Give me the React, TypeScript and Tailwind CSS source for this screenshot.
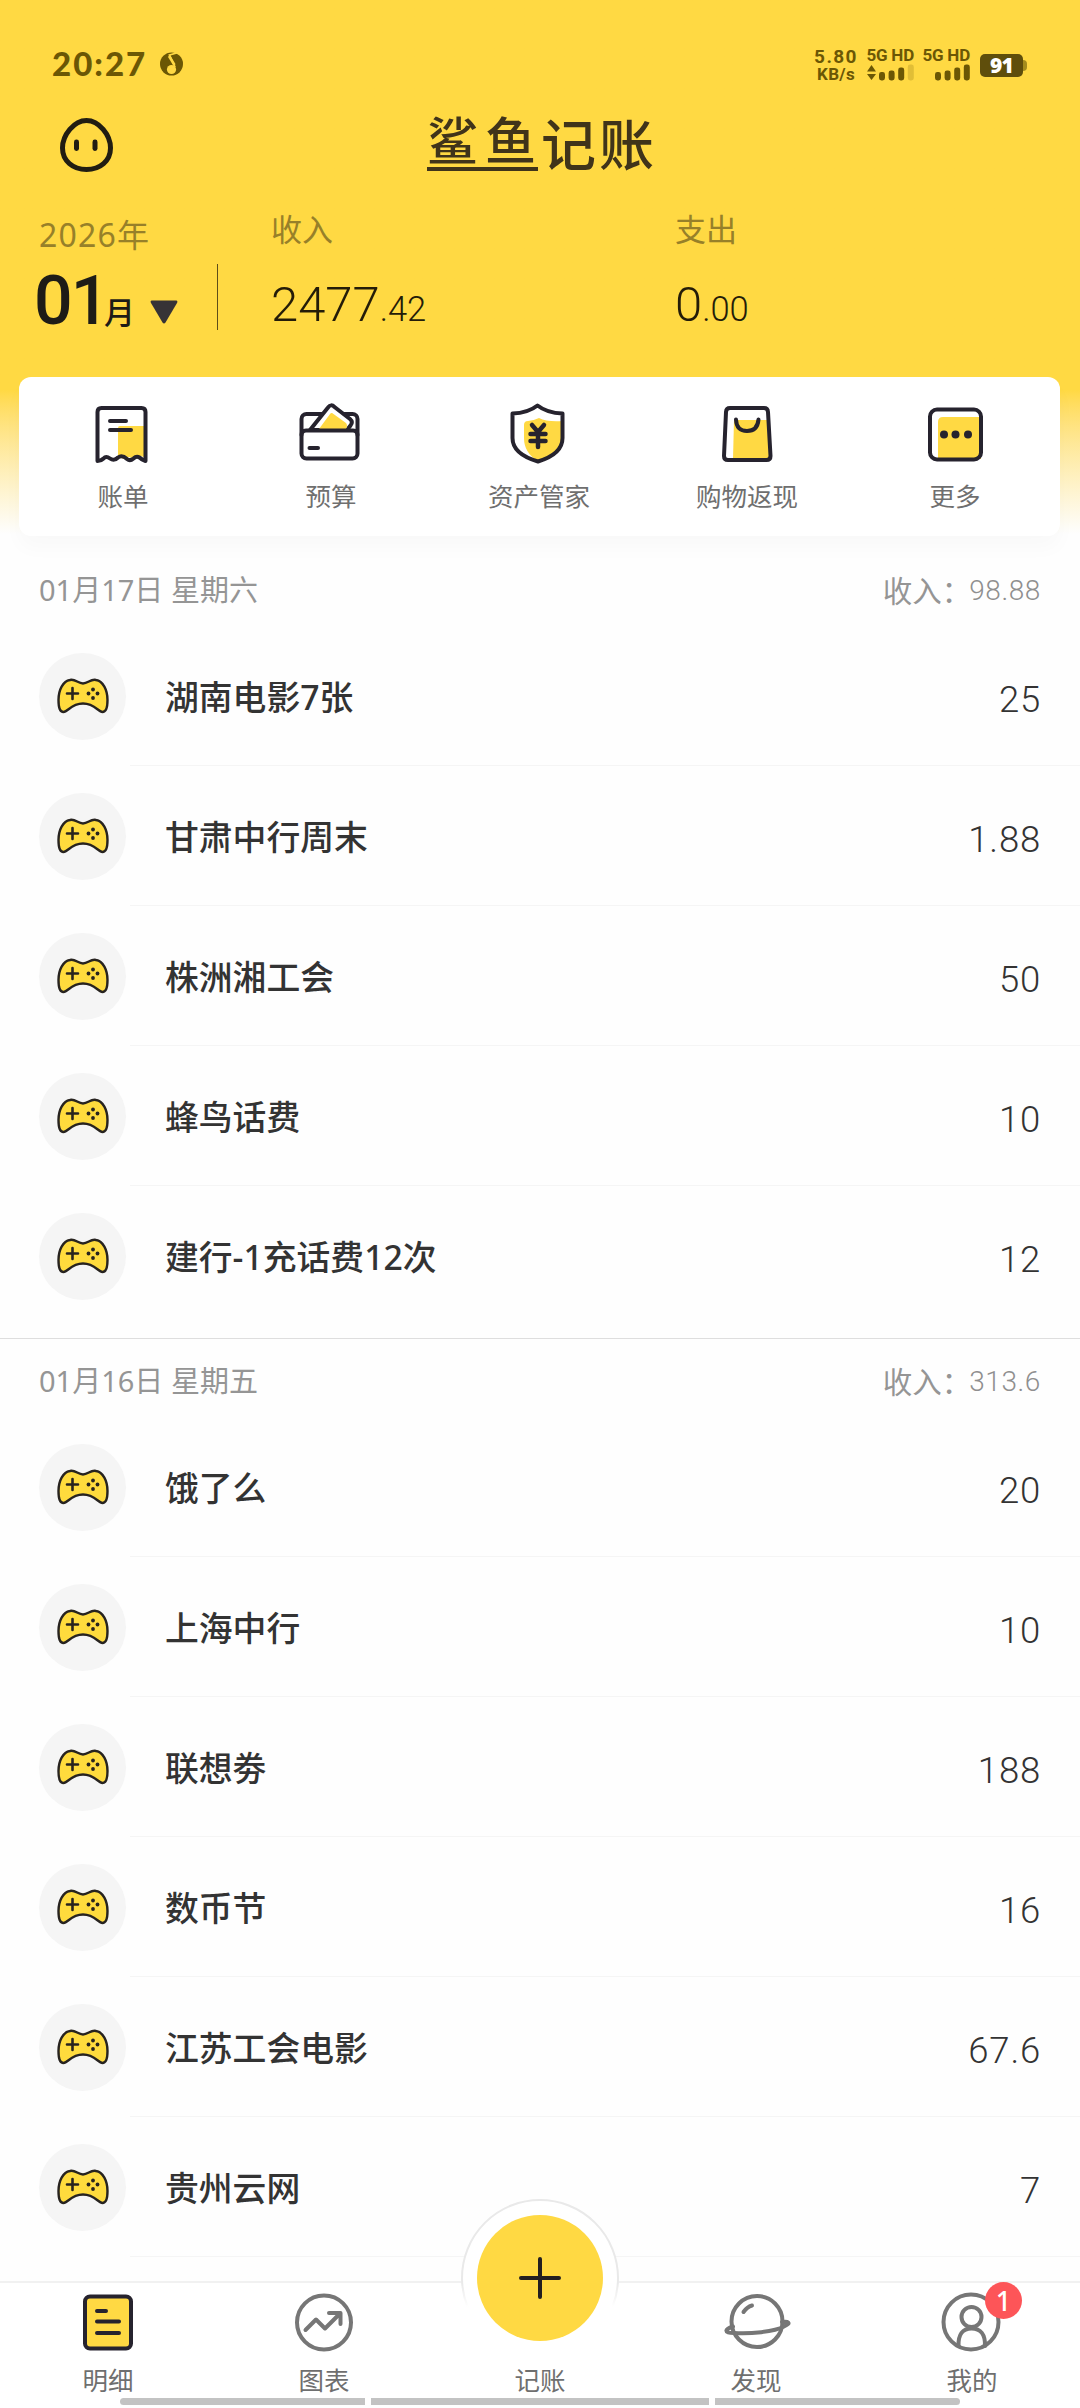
import type { ReactNode } from "react";

interface Entry {
  title: string;
  amount: string;
}

interface Day {
  date: string;
  income: string;
  entries: Entry[];
}

const days: Day[] = [
  {
    date: "01月17日 星期六",
    income: "98.88",
    entries: [
      { title: "湖南电影7张", amount: "25" },
      { title: "甘肃中行周末", amount: "1.88" },
      { title: "株洲湘工会", amount: "50" },
      { title: "蜂鸟话费", amount: "10" },
      { title: "建行-1充话费12次", amount: "12" },
    ],
  },
  {
    date: "01月16日 星期五",
    income: "313.6",
    entries: [
      { title: "饿了么", amount: "20" },
      { title: "上海中行", amount: "10" },
      { title: "联想劵", amount: "188" },
      { title: "数币节", amount: "16" },
      { title: "江苏工会电影", amount: "67.6" },
      { title: "贵州云网", amount: "7" },
    ],
  },
];

const INK = "#26232e";
const YELLOW = "#ffd943";

function MusicIcon() {
  return (
    <svg className="w-[23px] h-[24px]" viewBox="0 0 23 24">
      <circle cx="11.5" cy="12" r="11.5" fill="#6b5705" />
      <path d="M18.500 0.500 L9.500 3 L15 15" fill="none" stroke={YELLOW} strokeWidth="1.800" />
      <path d="M9 4 L14.500 13" stroke={YELLOW} strokeWidth="2.600" />
      <circle cx="11.500" cy="17.500" r="4.600" fill={YELLOW} />
    </svg>
  );
}

function Signal({ arrows, bars }: { arrows?: boolean; bars: number }) {
  return (
    <div className="flex flex-col items-end w-[48px]">
      <div className="text-[17px] leading-[18px] font-bold whitespace-nowrap font-['Roboto',sans-serif] tracking-[-0.2px]">5G HD</div>
      <svg className="w-[48px] h-[17px]" viewBox="0 0 48 17" fill="#6b5705">
        {arrows && <path d="M1 7.5 L5.5 1 L10 7.5Z M1 10 L5.5 16 L10 10Z" />}
        {[0, 1, 2, 3].map(i => (
          <rect
            key={i}
            x={13 + i * 9.6}
            y={[8, 6.5, 3.5, 0.5][i]}
            width="6"
            height={[8.5, 10, 13, 16][i]}
            rx="2.4"
            opacity={i < bars ? 1 : 0.2}
          />
        ))}
      </svg>
    </div>
  );
}

function StatusBar() {
  return (
    <div className="h-[112px] pt-[46px] pl-[52px] pr-[53px] flex items-start justify-between text-[#6b5705]">
      <div className="flex items-center h-[34px]">
        <span className="text-[33px] leading-[34px] font-black tracking-[2px] font-['Lato',sans-serif]">20:27</span>
        <div className="ml-[13px] mt-[2px]"><MusicIcon /></div>
      </div>
      <div className="flex items-start font-['Roboto',sans-serif]">
        <div className="w-[46px] mt-[1px] flex flex-col items-center font-bold">
          <span className="text-[19px] leading-[19px] tracking-[1.4px]">5.80</span>
          <span className="text-[17px] leading-[17px] tracking-[0.3px]">KB/s</span>
        </div>
        <div className="ml-[7px]"><Signal arrows bars={3} /></div>
        <div className="ml-[8px]"><Signal bars={4} /></div>
        <div className="flex items-center ml-[10px] mt-[8px]">
          <div className="w-[43px] h-[23px] rounded-[5px] bg-[#5f4e0c] text-white text-[21px] leading-[23px] font-extrabold text-center tracking-[-0.8px] font-['Open_Sans',sans-serif]">91</div>
          <div className="w-[4px] h-[11px] rounded-r-[4px] bg-[#a48c1d]" />
        </div>
      </div>
    </div>
  );
}

function Amount({ value }: { value: string }) {
  const [whole, cents] = value.split(".");
  return (
    <div className="font-['Roboto',sans-serif] font-light text-[#241c08] text-[49px] leading-[56px]">
      {whole}
      <span className="text-[34.5px]">.{cents}</span>
    </div>
  );
}

function Header() {
  return (
    <>
      <div className="h-[72px] flex items-start relative pl-[60px] pt-[6px]">
        <svg className="w-[53px] h-[54px]" viewBox="0 0 53 54" fill="none">
          <path
            d="M26.5 2.5 C39 2.5 50.5 17 50.5 30 C50.5 43 40 51.5 26.5 51.5 C13 51.5 2.5 43 2.5 30 C2.5 17 14 2.5 26.5 2.5Z"
            stroke="#211d12"
            strokeWidth="5"
          />
          <rect x="14" y="21.5" width="5" height="11.5" rx="2.4" fill="#211d12" />
          <rect x="32.5" y="21.5" width="5" height="11.5" rx="2.4" fill="#211d12" />
        </svg>
        <h1 className="absolute inset-x-0 top-[4px] flex justify-center text-[#40341a] font-medium leading-[56px] whitespace-nowrap">
          <span className="w-[111px] h-[55px] border-b-4 border-[#40341a] text-[51px] leading-[48px] tracking-[7px]">鲨鱼</span>
          <span className="ml-[3px] w-[112px] text-[55px] tracking-[3px]">记账</span>
        </h1>
      </div>
      <div className="flex h-[193px]">
        <div className="w-[217px] pl-[39px] pt-[31px]">
          <div className="text-[32px] leading-[40px] text-[#978029] tracking-[1.2px]">2026年</div>
          <div className="flex items-baseline ml-[-5px] mt-[12px]">
            <span className="w-[70px] text-[68px] leading-[68px] font-medium text-[#1e1c17] tracking-[-2px] font-['Roboto',sans-serif]">01</span>
            <span className="text-[31px] leading-[40px] font-medium text-[#1e1c17]">月</span>
            <svg className="w-[28px] h-[24px] ml-[15px]" viewBox="0 0 28 24">
              <path d="M1.5 0.5 H26.5 Q28 1 27 3 L15.5 22.5 Q14 24.5 12.5 22.5 L1 3 Q0 1 1.5 0.5Z" fill="#363336" />
            </svg>
          </div>
        </div>
        <div className="w-px h-[66px] mt-[80px] bg-[#5d4d18]" />
        <div className="w-[404px] pl-[53px] pt-[25px]">
          <div className="text-[31px] leading-[40px] text-[#978029]">收入</div>
          <div className="mt-[28px]"><Amount value="2477.42" /></div>
        </div>
        <div className="pl-[53px] pt-[25px]">
          <div className="text-[31px] leading-[40px] text-[#978029]">支出</div>
          <div className="mt-[28px]"><Amount value="0.00" /></div>
        </div>
      </div>
    </>
  );
}

function QuickAction({ label, children }: { label: string; children: ReactNode }) {
  return (
    <div className="flex flex-col items-center w-[208px] pt-[26px]">
      <svg className="w-[60px] h-[60px] overflow-visible" viewBox="0 0 60 60" fill="none" stroke={INK} strokeWidth="4" strokeLinecap="round" strokeLinejoin="round">
        {children}
      </svg>
      <span className="mt-[15px] text-[25.5px] leading-[36px] text-[#6f6f6f]">{label}</span>
    </div>
  );
}

function QuickActions() {
  return (
    <div className="ml-[19px] mr-[20px] h-[159px] bg-white rounded-[12px] flex shadow-[0_12px_20px_rgba(0,0,0,0.025)]">
      <QuickAction label="账单">
        <path d="M25 25 Q25 23 27 23 H53 V55 L48 53 L42 56 L36 54 L31 56 L25 54Z" fill={YELLOW} stroke="none" />
        <path d="M4.5 58 V9 Q4.5 5 8.500 5 H48.500 Q52.500 5 52.500 9 V58 Q49 57 46.500 54.500 Q43.500 52.500 40.500 55.500 Q37 58.500 34 56 Q29 51.500 25 54.500 Q21 58.500 17 55.500 Q13 52.500 10.500 55.500 Q8 58 4.500 58Z" />
        <path d="M17 18 H33 M17 27 H38" />
      </QuickAction>
      <QuickAction label="预算">
        <rect x="0.500" y="11" width="56" height="44.500" rx="5" />
        <path d="M9 27 L27 4.500 Q30 0.500 33.500 4 L49 16 Q52.500 19 49.500 22.500 L46 27Z" fill="#fff" />
        <path d="M18 26 L29 11 Q30.500 9 32.500 11 L45 20 Q47 22 45 26Z" fill={YELLOW} stroke="none" />
        <path d="M0.500 32 Q0.500 27.500 5 27.500 H52 Q56.500 27.500 56.500 32" />
        <path d="M8.500 45 H17" />
      </QuickAction>
      <QuickAction label="资产管家">
        <path d="M15 22 Q15 18 19 18 Q25 17.500 30 15 Q38 19 53 18 V35 Q53 50 29 58 Q15 50 15 35Z" fill={YELLOW} stroke="none" />
        <path d="M28.500 2.500 Q38 10 53.500 10.500 V35 Q53.500 51 29 58.500 Q3.500 51 3.500 35 V10.500 Q19 10 28.500 2.500Z" />
        <path d="M23 22 L29 29 L35 22 M29 29 V44 M21.500 31 H36.500 M21.500 38 H36.500" strokeWidth="4.500" />
      </QuickAction>
      <QuickAction label="购物返现">
        <path d="M17 17 H50 L52.500 56 H16Z" fill={YELLOW} stroke="none" />
        <path d="M13 5 H47 Q50.800 5 51 9 L53.500 53 Q53.500 57 49.500 57 H11 Q7 57 7 53 L9 9 Q9.200 5 13 5Z" />
        <path d="M19 16.500 Q19.500 28 30 28 Q40.500 28 41.500 16.500" />
      </QuickAction>
      <QuickAction label="更多">
        <path d="M13 56 V19 Q13 14 18 14 H56 V56Z" fill={YELLOW} stroke="none" />
        <rect x="5" y="6.500" width="51" height="50" rx="7" />
        <g fill={INK} stroke="none">
          <circle cx="19" cy="31.500" r="4" />
          <circle cx="30.500" cy="31.500" r="4" />
          <circle cx="43" cy="31.500" r="4" />
        </g>
      </QuickAction>
    </div>
  );
}

function GamepadIcon() {
  return (
    <svg className="w-[52px] h-[36px]" viewBox="0 0 52 36" fill="none" stroke="#27231f" strokeWidth="2.4" strokeLinecap="round">
      <path
        d="M13 2 C18 0.500 21 5.500 26 5.500 C31 5.500 34 0.500 39 2 C46 3 50.500 12 50.500 22 C50.500 30 49 34 45.500 34 C41 34 38 25.500 26 25.500 C14 25.500 11 34 6.500 34 C3 34 1.500 30 1.500 22 C1.500 12 6 3 13 2Z"
        fill="#ffdb3d"
      />
      <path d="M10 15.500 H21 M15.500 10 V21" strokeWidth="2.600" />
      <g fill="#27231f" stroke="none">
        <circle cx="36" cy="11.500" r="1.900" />
        <circle cx="31.500" cy="15.500" r="1.900" />
        <circle cx="40.500" cy="15.500" r="1.900" />
        <circle cx="36" cy="20" r="1.900" />
      </g>
    </svg>
  );
}

function EntryRow({ entry, last }: { entry: Entry; last: boolean }) {
  return (
    <div className="h-[140px] flex items-stretch pl-[39px]">
      <div className="w-[91px] flex items-center">
        <div className="w-[87px] h-[87px] rounded-full bg-[#f5f5f5] flex items-center justify-center">
          <GamepadIcon />
        </div>
      </div>
      <div className={`flex-1 flex items-center justify-between pl-[35px] pr-[39px] border-b-[1.5px] ${last ? "border-transparent" : "border-[#f5f5f5]"}`}>
        <span className="mt-[2px] text-[33.8px] leading-[50px] font-medium text-[#333]">{entry.title}</span>
        <span className="mt-[8px] text-[36.5px] leading-[44px] font-light text-[#333] font-['Roboto',sans-serif] tracking-[0.8px]">{entry.amount}</span>
      </div>
    </div>
  );
}

function DaySection({ day, first, last }: { day: Day; first: boolean; last: boolean }) {
  return (
    <section className={first ? "pt-[12px] pb-[12px]" : "border-t-[1.5px] border-[#dedede]"}>
      <div className="h-[78px] pt-[5px] pl-[39px] pr-[39px] flex items-center justify-between text-[#959595]">
        <span className="text-[29px] leading-[40px]">{day.date}</span>
        <span className="text-[29.5px] leading-[40px] flex items-center mt-[3px]">
          收入：<span className="text-[28px] font-light font-['Roboto',sans-serif] text-[#8f8f8f] ml-[-2px] tracking-[0.6px]">{day.income}</span>
        </span>
      </div>
      {day.entries.map((entry, i) => (
        <EntryRow key={entry.title} entry={entry} last={!last && i === day.entries.length - 1} />
      ))}
    </section>
  );
}

function Tab({ label, children }: { label: string; children?: ReactNode }) {
  return (
    <div className="relative w-[216px] flex flex-col items-center pt-[9px]">
      <svg className="w-[60px] h-[60px] overflow-visible" viewBox="0 0 60 60" fill="none" stroke="#767676" strokeWidth="4" strokeLinecap="round" strokeLinejoin="round">
        {children}
      </svg>
      <span className="mt-[10px] text-[25.5px] leading-[36px] text-[#6f6f6f]">{label}</span>
    </div>
  );
}

function TabBar() {
  return (
    <nav className="absolute bottom-0 inset-x-0 h-[127px] bg-white border-t-2 border-[#f1f1f1]">
      <div className="absolute left-[461px] top-[-84px] w-[158px] h-[158px] rounded-full bg-white border-[2px] border-[#e9e9e9]" />
      {/* fades the lower half of the ring into the bar */}
      <div className="absolute left-[455px] top-0 w-[170px] h-[80px] bg-linear-to-b from-white/0 to-white to-[24px]" />
      <div className="absolute left-[477px] top-[-68px] w-[126px] h-[126px] rounded-full bg-[#ffd943] flex items-center justify-center">
        <svg className="w-[44px] h-[44px]" viewBox="0 0 44 44" stroke="#231f20" strokeWidth="4" strokeLinecap="round">
          <path d="M3 22 H41 M22 3 V41" />
        </svg>
      </div>
      <div className="relative flex">
        <Tab label="明细">
          <rect x="7" y="4.500" width="46" height="52" rx="5" fill={YELLOW} stroke={INK} />
          <path d="M19 19 H28 M19 29.500 H41 M19 41 H41" stroke={INK} />
        </Tab>
        <Tab label="图表">
          <circle cx="30" cy="30.500" r="27" />
          <path d="M11.500 38 L22 27.500 L31 36.500 L46 21.500 M35 21 H46.500 V32" />
        </Tab>
        <Tab label="记账" />
        <Tab label="发现">
          <circle cx="31" cy="29.500" r="25.500" />
          <path d="M17.500 20 Q21 15 26 13.500" />
          <path d="M7 34.500 C-1 37 -3 41 8 41 C24 42 48 40 58 34.500 C66 31 62 29 56 30" />
        </Tab>
        <Tab label="我的">
          <circle cx="29" cy="30" r="27.500" />
          <circle cx="29.500" cy="25" r="10" />
          <path d="M16.500 54 Q16 36.500 29.500 36.500 Q43.500 36.500 43 54" />
        </Tab>
        <div className="absolute left-[985px] top-[-1px] w-[37px] h-[37px] rounded-full bg-[#fd5558] text-white text-[27px] leading-[37px] font-medium text-center">1</div>
      </div>
      <div className="absolute left-[120px] bottom-[3px] flex gap-[6px]">
        <div className="w-[245px] h-[7px] rounded-l-full bg-[#c3c3c3]" />
        <div className="w-[338px] h-[7px] bg-[#c3c3c3]" />
        <div className="w-[245px] h-[7px] rounded-r-full bg-[#c3c3c3]" />
      </div>
    </nav>
  );
}

export default function App() {
  return (
    <div className="relative w-[1080px] h-[2408px] overflow-hidden bg-[#fefefe] font-['Noto_Sans','Noto_Sans_CJK_SC',sans-serif]">
      <div className="h-[536px] bg-linear-to-b from-[#ffd943] from-[390px] to-[#fefefe] to-[534px]">
        <StatusBar />
        <Header />
        <QuickActions />
      </div>
      {days.map((day, i) => (
        <DaySection key={day.date} day={day} first={i === 0} last={i === days.length - 1} />
      ))}
      <TabBar />
    </div>
  );
}
